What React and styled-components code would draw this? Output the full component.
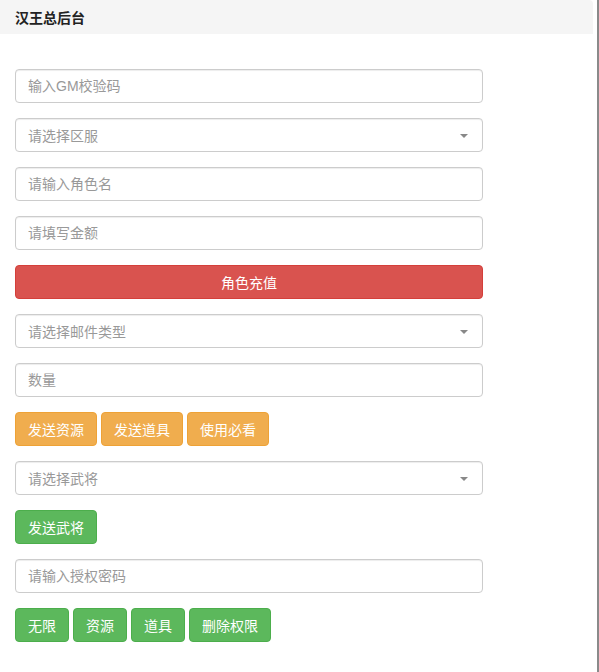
import React from 'react';
import styled, { createGlobalStyle } from 'styled-components';

const GlobalStyle = createGlobalStyle`
  html, body {
    margin: 0;
    padding: 0;
    background: #fff;
  }
  body {
    font-family: "Liberation Sans", "Noto Sans CJK SC", sans-serif;
    font-size: 14px;
    color: #333;
  }
  * {
    box-sizing: border-box;
  }
`;

const Frame = styled.div`
  width: 599px;
  min-height: 672px;
  border-right: 2px solid #8a8a8a;
  padding-right: 4px;
`;

const Panel = styled.div`
  background: #fff;
  border-radius: 4px;
`;

const PanelHeading = styled.div`
  height: 34px;
  padding: 0 15px;
  display: flex;
  align-items: center;
  background: #f5f5f5;
  border-top-right-radius: 4px;
  font-size: 14px;
  font-weight: bold;
  color: #222;
`;

const PanelBody = styled.div`
  padding: 35px 15px 20px;
  width: 498px;
  display: flex;
  flex-direction: column;
  gap: 15px;
`;

const Input = styled.input`
  display: block;
  width: 100%;
  height: 34px;
  padding: 6px 12px;
  font-family: inherit;
  font-size: 14px;
  color: #555;
  border: 1px solid #ccc;
  border-radius: 4px;
  box-shadow: inset 0 1px 1px rgba(0, 0, 0, 0.075);
  outline: none;

  &::placeholder {
    color: #999;
  }
`;

const SelectBox = styled.div`
  position: relative;
  height: 34px;
  padding: 0 12px;
  display: flex;
  align-items: center;
  border: 1px solid #ccc;
  border-radius: 4px;
  box-shadow: inset 0 1px 1px rgba(0, 0, 0, 0.075);
  color: #999;

  &::after {
    content: '';
    position: absolute;
    right: 14px;
    top: 15px;
    border-left: 4px solid transparent;
    border-right: 4px solid transparent;
    border-top: 4px solid #888;
  }
`;

const palette = {
  danger: { bg: '#d9534f', border: '#d43f3a' },
  warning: { bg: '#f0ad4e', border: '#eea236' },
  success: { bg: '#5cb85c', border: '#4cae4c' },
};

const Button = styled.button`
  height: 34px;
  padding: 0 12px;
  font-family: inherit;
  font-size: 14px;
  color: #fff;
  background: ${(p) => palette[p.$kind].bg};
  border: 1px solid ${(p) => palette[p.$kind].border};
  border-radius: 4px;
  cursor: pointer;
  width: ${(p) => (p.$block ? '100%' : 'auto')};
`;

const ButtonRow = styled.div`
  display: flex;
  gap: 4px;
`;

export default function App() {
  return (
    <>
      <GlobalStyle />
      <Frame>
        <Panel>
          <PanelHeading>汉王总后台</PanelHeading>
          <PanelBody>
            <Input placeholder="输入GM校验码" />
            <SelectBox>请选择区服</SelectBox>
            <Input placeholder="请输入角色名" />
            <Input placeholder="请填写金额" />
            <Button $kind="danger" $block>角色充值</Button>
            <SelectBox>请选择邮件类型</SelectBox>
            <Input placeholder="数量" />
            <ButtonRow>
              <Button $kind="warning">发送资源</Button>
              <Button $kind="warning">发送道具</Button>
              <Button $kind="warning">使用必看</Button>
            </ButtonRow>
            <SelectBox>请选择武将</SelectBox>
            <ButtonRow>
              <Button $kind="success">发送武将</Button>
            </ButtonRow>
            <Input placeholder="请输入授权密码" />
            <ButtonRow>
              <Button $kind="success">无限</Button>
              <Button $kind="success">资源</Button>
              <Button $kind="success">道具</Button>
              <Button $kind="success">删除权限</Button>
            </ButtonRow>
          </PanelBody>
        </Panel>
      </Frame>
    </>
  );
}
